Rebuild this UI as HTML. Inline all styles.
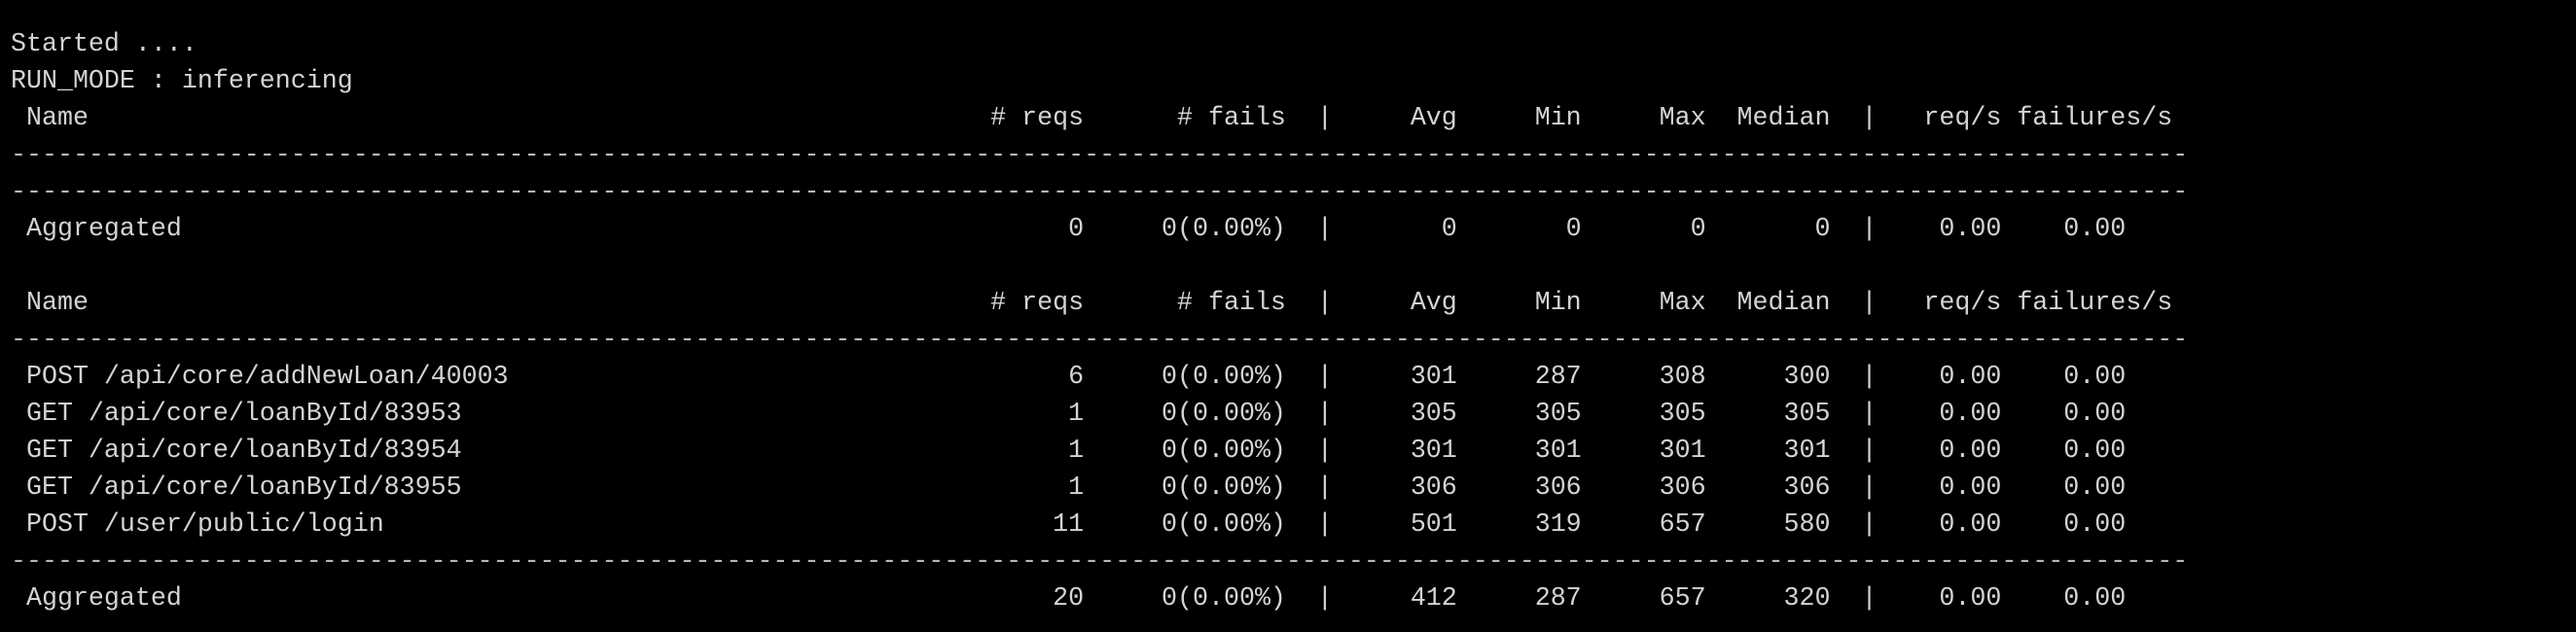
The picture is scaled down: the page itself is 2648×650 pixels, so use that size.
<!DOCTYPE html>
<html><head><meta charset="utf-8"><style>
html,body{margin:0;padding:0;background:#000;}
body{width:2648px;height:650px;position:relative;overflow:hidden;font-family:"Liberation Mono","DejaVu Sans Mono",monospace;font-size:26.65px;color:#d4d4d4;}
.l{position:absolute;left:0;height:38px;line-height:38px;width:2648px;white-space:pre;}
.l span{position:absolute;top:0;}
.n{left:calc(11px + 1ch);}
.r{left:calc(11px + var(--e) * 1ch);transform:translateX(-100%);}
.p{left:calc(11px + var(--e) * 1ch);}
.d{color:#b8b8b8;left:11px;}
</style></head><body>
<div class="l" style="top:27px"><span style="left:11px">Started ....</span></div>
<div class="l" style="top:65px"><span style="left:11px">RUN_MODE : inferencing</span></div>

<div class="l" style="top:103px"><span class="n">Name</span><span class="r" style="--e:69"># reqs</span><span class="r" style="--e:82"># fails</span><span class="p" style="--e:84">|</span><span class="r" style="--e:93">Avg</span><span class="r" style="--e:101">Min</span><span class="r" style="--e:109">Max</span><span class="r" style="--e:117">Median</span><span class="p" style="--e:119">|</span><span class="r" style="--e:128">req/s</span><span class="r" style="--e:139">failures/s</span></div>
<div class="l" style="top:141px"><span class="d">--------------------------------------------------------------------------------------------------------------------------------------------</span></div>
<div class="l" style="top:179px"><span class="d">--------------------------------------------------------------------------------------------------------------------------------------------</span></div>
<div class="l" style="top:217px"><span class="n">Aggregated</span><span class="r" style="--e:69">0</span><span class="r" style="--e:82">0(0.00%)</span><span class="p" style="--e:84">|</span><span class="r" style="--e:93">0</span><span class="r" style="--e:101">0</span><span class="r" style="--e:109">0</span><span class="r" style="--e:117">0</span><span class="p" style="--e:119">|</span><span class="r" style="--e:128">0.00</span><span class="r" style="--e:136">0.00</span></div>

<div class="l" style="top:293px"><span class="n">Name</span><span class="r" style="--e:69"># reqs</span><span class="r" style="--e:82"># fails</span><span class="p" style="--e:84">|</span><span class="r" style="--e:93">Avg</span><span class="r" style="--e:101">Min</span><span class="r" style="--e:109">Max</span><span class="r" style="--e:117">Median</span><span class="p" style="--e:119">|</span><span class="r" style="--e:128">req/s</span><span class="r" style="--e:139">failures/s</span></div>
<div class="l" style="top:331px"><span class="d">--------------------------------------------------------------------------------------------------------------------------------------------</span></div>
<div class="l" style="top:369px"><span class="n">POST /api/core/addNewLoan/40003</span><span class="r" style="--e:69">6</span><span class="r" style="--e:82">0(0.00%)</span><span class="p" style="--e:84">|</span><span class="r" style="--e:93">301</span><span class="r" style="--e:101">287</span><span class="r" style="--e:109">308</span><span class="r" style="--e:117">300</span><span class="p" style="--e:119">|</span><span class="r" style="--e:128">0.00</span><span class="r" style="--e:136">0.00</span></div>
<div class="l" style="top:407px"><span class="n">GET /api/core/loanById/83953</span><span class="r" style="--e:69">1</span><span class="r" style="--e:82">0(0.00%)</span><span class="p" style="--e:84">|</span><span class="r" style="--e:93">305</span><span class="r" style="--e:101">305</span><span class="r" style="--e:109">305</span><span class="r" style="--e:117">305</span><span class="p" style="--e:119">|</span><span class="r" style="--e:128">0.00</span><span class="r" style="--e:136">0.00</span></div>
<div class="l" style="top:445px"><span class="n">GET /api/core/loanById/83954</span><span class="r" style="--e:69">1</span><span class="r" style="--e:82">0(0.00%)</span><span class="p" style="--e:84">|</span><span class="r" style="--e:93">301</span><span class="r" style="--e:101">301</span><span class="r" style="--e:109">301</span><span class="r" style="--e:117">301</span><span class="p" style="--e:119">|</span><span class="r" style="--e:128">0.00</span><span class="r" style="--e:136">0.00</span></div>
<div class="l" style="top:483px"><span class="n">GET /api/core/loanById/83955</span><span class="r" style="--e:69">1</span><span class="r" style="--e:82">0(0.00%)</span><span class="p" style="--e:84">|</span><span class="r" style="--e:93">306</span><span class="r" style="--e:101">306</span><span class="r" style="--e:109">306</span><span class="r" style="--e:117">306</span><span class="p" style="--e:119">|</span><span class="r" style="--e:128">0.00</span><span class="r" style="--e:136">0.00</span></div>
<div class="l" style="top:521px"><span class="n">POST /user/public/login</span><span class="r" style="--e:69">11</span><span class="r" style="--e:82">0(0.00%)</span><span class="p" style="--e:84">|</span><span class="r" style="--e:93">501</span><span class="r" style="--e:101">319</span><span class="r" style="--e:109">657</span><span class="r" style="--e:117">580</span><span class="p" style="--e:119">|</span><span class="r" style="--e:128">0.00</span><span class="r" style="--e:136">0.00</span></div>
<div class="l" style="top:559px"><span class="d">--------------------------------------------------------------------------------------------------------------------------------------------</span></div>
<div class="l" style="top:597px"><span class="n">Aggregated</span><span class="r" style="--e:69">20</span><span class="r" style="--e:82">0(0.00%)</span><span class="p" style="--e:84">|</span><span class="r" style="--e:93">412</span><span class="r" style="--e:101">287</span><span class="r" style="--e:109">657</span><span class="r" style="--e:117">320</span><span class="p" style="--e:119">|</span><span class="r" style="--e:128">0.00</span><span class="r" style="--e:136">0.00</span></div>
</body></html>
